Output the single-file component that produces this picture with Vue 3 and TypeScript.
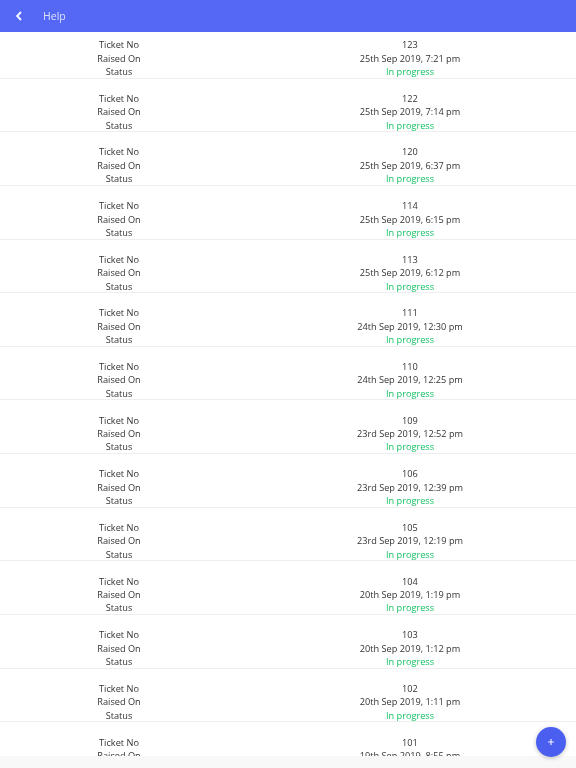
<script setup lang="ts">
const tickets = [
  { no: 123, date: '25th Sep 2019, 7:21 pm' },
  { no: 122, date: '25th Sep 2019, 7:14 pm' },
  { no: 120, date: '25th Sep 2019, 6:37 pm' },
  { no: 114, date: '25th Sep 2019, 6:15 pm' },
  { no: 113, date: '25th Sep 2019, 6:12 pm' },
  { no: 111, date: '24th Sep 2019, 12:30 pm' },
  { no: 110, date: '24th Sep 2019, 12:25 pm' },
  { no: 109, date: '23rd Sep 2019, 12:52 pm' },
  { no: 106, date: '23rd Sep 2019, 12:39 pm' },
  { no: 105, date: '23rd Sep 2019, 12:19 pm' },
  { no: 104, date: '20th Sep 2019, 1:19 pm' },
  { no: 103, date: '20th Sep 2019, 1:12 pm' },
  { no: 102, date: '20th Sep 2019, 1:11 pm' },
  { no: 101, date: '19th Sep 2019, 8:55 pm' },
]
</script>

<template>
  <div class="page">
    <header class="bar">
      <svg class="back" width="10" height="12" viewBox="0 0 10 12" fill="none">
        <path d="M7 2 3.2 6 7 10" stroke="#f4f5ff" stroke-width="2" />
      </svg>
      <span class="title">Help</span>
    </header>
    <main class="list">
      <section v-for="t in tickets" :key="t.no" class="row">
        <span class="label">Ticket No</span>
        <span class="value">{{ t.no }}</span>
        <span class="label">Raised On</span>
        <span class="value">{{ t.date }}</span>
        <span class="label">Status</span>
        <span class="value status">In progress</span>
      </section>
    </main>
    <div class="footer"></div>
    <button class="fab" aria-label="Add">
      <svg width="10" height="10" viewBox="0 0 10 10"><path d="M5 2v6M2 5h6" stroke="#e8ebff" stroke-width="1.2" /></svg>
    </button>
  </div>
</template>

<style>
html, body { margin: 0; background: #fff; }
</style>

<style scoped>
.page {
  position: relative;
  width: 576px;
  height: 768px;
  overflow: hidden;
  display: flex;
  flex-direction: column;
  background: #fff;
  font-family: "Open Sans", sans-serif;
}
.bar {
  flex: none;
  height: 32px;
  display: flex;
  align-items: center;
  background: #5468f5;
  padding-left: 14px;
}
.back { filter: blur(0.5px); }
.title {
  margin-left: 19px;
  font-size: 10.5px;
  color: #dfe3ff;
  filter: blur(0.7px);
}
.list {
  flex: 1;
  min-height: 0;
  overflow: hidden;
  filter: blur(0.75px);
}
.row {
  box-sizing: border-box;
  height: 53.65px;
  padding-top: 13px;
  display: grid;
  grid-template-columns: 238px 344px;
  grid-auto-rows: 13.4px;
  justify-items: center;
  align-items: center;
  font-size: 9.2px;
  color: #333;
  border-bottom: 1px solid #eeeeee;
}
.row:first-child {
  height: 46.65px;
  padding-top: 6px;
}
.status { color: #16c265; }
.footer {
  flex: none;
  height: 12px;
  background: #f8f8f8;
}
.fab {
  position: absolute;
  left: 536px;
  top: 727px;
  width: 30px;
  height: 30px;
  padding: 0;
  border: none;
  border-radius: 50%;
  display: flex;
  align-items: center;
  justify-content: center;
  background: #4a5ff0;
  box-shadow: 0 1px 4px rgba(0, 0, 0, 0.25);
  filter: blur(0.5px);
}
</style>
